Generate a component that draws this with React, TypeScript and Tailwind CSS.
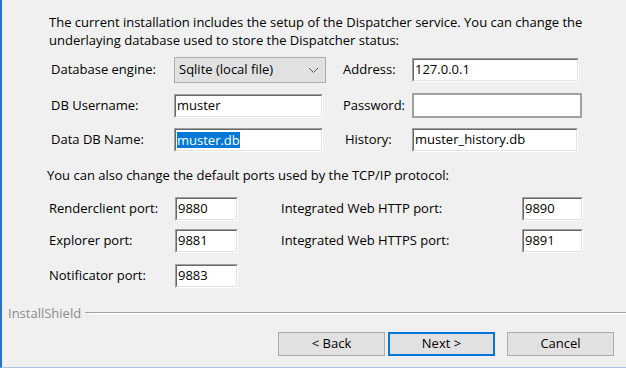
const font = { fontFamily: '"Open Sans", "Noto Sans", Arial, sans-serif' };

const Field = ({ value, w, selected }: { value: string; w: string; selected?: boolean }) => (
  <div className={`${w} h-[24px] border border-t-[#a0a0a0] border-l-[#a0a0a0] border-b-white border-r-white`}>
    <div className="h-full border border-t-[#696969] border-l-[#696969] border-b-[#e3e3e3] border-r-[#e3e3e3] bg-white flex items-center pl-px text-[13px] text-black">
      {selected ? <span className="bg-[#0078d7] text-white leading-[16px]">{value}</span> : value}
    </div>
  </div>
);

const Label = ({ children }: { children: string }) => <div className="text-[13px] text-black">{children}</div>;

const Button = ({ children, primary }: { children: string; primary?: boolean }) => (
  <button
    className={`w-[107px] h-[24px] bg-[#e1e1e1] text-[13px] text-black flex items-center justify-center ${
      primary ? "border-2 border-[#0078d7]" : "border border-[#adadad]"
    }`}
  >
    {children}
  </button>
);

export default function App() {
  return (
    <div style={font} className="w-[626px] h-[368px] bg-[#f0f0f0] border-l-2 border-l-[#2b73c8] border-b border-b-[#a9c7e6] flex flex-col">
      <p className="pl-[47px] pt-[13px] text-[13px] leading-[18px] text-black">
        The current installation includes the setup of the Dispatcher service. You can change the
        <br />
        underlaying database used to store the Dispatcher status:
      </p>

      <div className="mt-[8px] pl-[49px] grid grid-cols-[123px_169px_69px_170px] items-center gap-y-[10px]">
        <Label>Database engine:</Label>
        <div className="w-[152px] h-[26px] bg-[#e1e1e1] border border-[#adadad] flex items-center justify-between pl-[4px] pr-[6px] text-[13px] text-black">
          <span>Sqlite (local file)</span>
          <svg width="11" height="7" viewBox="0 0 11 7" fill="none" stroke="#5a5a5a" strokeWidth="1">
            <path d="M1 1l4.5 4.5L10 1" />
          </svg>
        </div>
        <Label>Address:</Label>
        <Field value="127.0.0.1" w="w-[167px]" />

        <Label>DB Username:</Label>
        <Field value="muster" w="w-[149px]" />
        <Label>Password:</Label>
        <div className="w-[170px] h-[25px] border-2 border-[#a0a0a0] bg-white" />

        <Label>Data DB Name:</Label>
        <Field value="muster.db" w="w-[149px]" selected />
        <div className="pl-[2px]">
          <Label>History:</Label>
        </div>
        <Field value="muster_history.db" w="w-[166px]" />
      </div>

      <p className="mt-[15px] pl-[45px] text-[13px] leading-[16px] text-black">
        You can also change the default ports used by the TCP/IP protocol:
      </p>

      <div className="mt-[14px] pl-[47px] grid grid-cols-[126px_106px_241px_61px] items-center gap-y-[8px]">
        <Label>Renderclient port:</Label>
        <Field value="9880" w="w-[63px]" />
        <Label>Integrated Web HTTP port:</Label>
        <Field value="9890" w="w-[61px]" />

        <Label>Explorer port:</Label>
        <Field value="9881" w="w-[63px]" />
        <Label>Integrated Web HTTPS port:</Label>
        <Field value="9891" w="w-[61px]" />

        <div className="pt-[3px]">
          <Label>Notificator port:</Label>
        </div>
        <div className="pt-[3px]">
          <Field value="9883" w="w-[63px]" />
        </div>
      </div>

      <div className="mt-[17px] pl-[6px] flex items-center gap-[4px]">
        <span className="text-[13px] leading-[16px] text-[#8c8c8c]">InstallShield</span>
        <div className="flex-1 border-t border-t-[#a0a0a0] border-b border-b-white" />
      </div>

      <div className="mt-[11px] pl-[276px] flex">
        <Button>&lt; Back</Button>
        <div className="ml-[3px]">
          <Button primary>Next &gt;</Button>
        </div>
        <div className="ml-[12px]">
          <Button>Cancel</Button>
        </div>
      </div>
    </div>
  );
}
